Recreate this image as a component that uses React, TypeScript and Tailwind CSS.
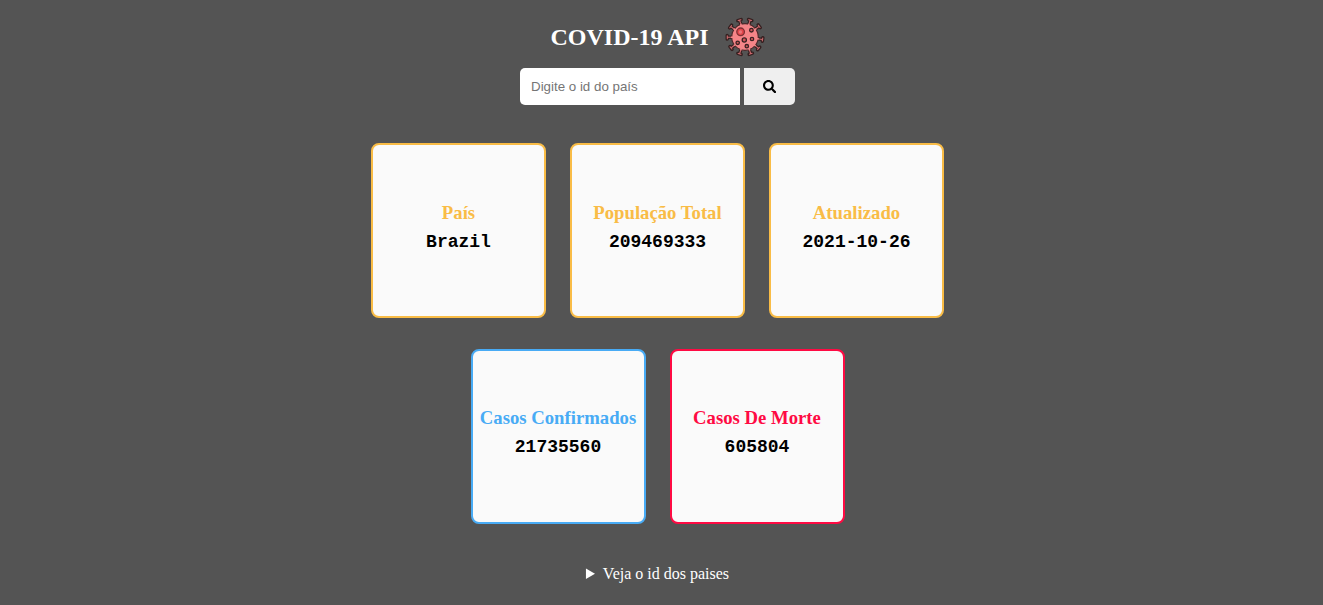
import { useState } from "react";
import { FaSearch } from "react-icons/fa";

type CardProps = { title: string; value: string; tone: string };

const SPIKES = [-18, 17, 53, 98, 130, 161, -162, -128, -91, -54];

function VirusIcon() {
  return (
    <svg viewBox="0 0 40 40" className="ml-4 size-10 shrink-0" aria-hidden="true">
      {SPIKES.map((angle) => (
        <g key={angle} transform={`rotate(${angle} 20 20)`} fill="none" strokeLinecap="round">
          <path d="M20 8V2.4M18.2 2.2h3.6" stroke="#352020" strokeWidth="3.4" />
          <path d="M20 9V2.6M18.6 2.3h2.8" stroke="#c9686c" strokeWidth="1.1" />
        </g>
      ))}
      <circle cx="20" cy="20" r="13.3" fill="#f58588" stroke="#4a2a2b" strokeWidth="1.2" />
      {SPIKES.map((angle) => (
        <path
          key={angle}
          transform={`rotate(${angle} 20 20)`}
          d="M20 9V6"
          stroke="#f58588"
          strokeWidth="1.6"
        />
      ))}
      <g fill="#d2575b" stroke="#3a2222" strokeWidth="1.3">
        <circle cx="15.6" cy="14.8" r="3.8" fill="#e2464b" stroke="#7e3034" />
        <circle cx="26.4" cy="13.2" r="1.8" />
        <circle cx="19.3" cy="23" r="2.1" />
        <circle cx="27" cy="22" r="1.7" />
        <circle cx="12.7" cy="25.8" r="1.7" />
        <circle cx="21.8" cy="29.2" r="1.7" />
      </g>
      <circle cx="15.4" cy="15" r="1.7" fill="#e87579" />
    </svg>
  );
}

function Card({ title, value, tone }: CardProps) {
  return (
    <article
      className={`flex h-[175px] w-[175px] flex-col items-center rounded-lg border-2 bg-[#fafafa] ${tone}`}
    >
      <h3 className="text-[18.72px] leading-[22px] font-bold whitespace-nowrap">{title}</h3>
      <p className="mt-2 font-['Liberation_Mono',monospace] text-[18px] leading-5 font-bold text-black">
        {value}
      </p>
    </article>
  );
}

export default function App() {
  const [query, setQuery] = useState("");
  return (
    <main className="flex min-h-screen flex-col items-center bg-[#545454] pt-[17px] pr-2 font-['Liberation_Serif',serif]">
      <header className="flex h-10 items-center">
        <h1 className="text-2xl leading-7 font-bold whitespace-nowrap text-white">COVID-19 API</h1>
        <VirusIcon />
      </header>
      <form className="mt-[11px] flex gap-1" onSubmit={(e) => e.preventDefault()}>
        <input
          value={query}
          onChange={(e) => setQuery(e.target.value)}
          placeholder="Digite o id do país"
          className="h-[37px] w-[220px] rounded-l-[5px] bg-white px-[11px] font-['Liberation_Sans',sans-serif] text-[13.333px] text-black outline-none placeholder:text-[#757575]"
        />
        <button
          type="submit"
          aria-label="Buscar"
          className="flex h-[37px] w-[51px] items-center justify-center rounded-r-[5px] bg-[#efefef] text-[13.333px] text-black"
        >
          <FaSearch />
        </button>
      </form>
      <section className="mt-[38px] flex gap-6">
        <Card title="País" value="Brazil" tone="pt-[57px] border-[#f9bc46] text-[#f9bc46]" />
        <Card title="População Total" value="209469333" tone="pt-[57px] border-[#f9bc46] text-[#f9bc46]" />
        <Card title="Atualizado" value="2021-10-26" tone="pt-[57px] border-[#f9bc46] text-[#f9bc46]" />
      </section>
      <section className="mt-[31px] flex gap-6">
        <Card title="Casos Confirmados" value="21735560" tone="pt-[56px] border-[#48abf5] text-[#48abf5]" />
        <Card title="Casos De Morte" value="605804" tone="pt-[56px] border-[#ff0a43] text-[#ff0a43]" />
      </section>
      <details className="mt-[41px] text-base leading-[18px] text-white">
        <summary className="cursor-pointer">Veja o id dos paises</summary>
      </details>
    </main>
  );
}
